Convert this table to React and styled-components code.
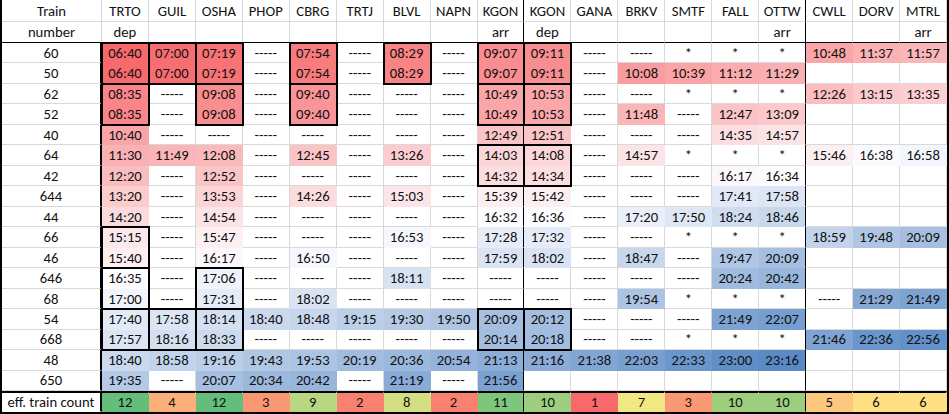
import React from 'react';
import styled, { createGlobalStyle } from 'styled-components';

const GlobalStyle = createGlobalStyle`
  html, body { margin: 0; padding: 0; background: #fff; }
  body { font-family: Carlito, Calibri, Lato, "Liberation Sans", sans-serif; }
`;

const STATIONS = ['TRTO','GUIL','OSHA','PHOP','CBRG','TRTJ','BLVL','NAPN','KGON','KGON','GANA','BRKV','SMTF','FALL','OTTW','CWLL','DORV','MTRL'];
const SUB = { 0: 'dep', 8: 'arr', 9: 'dep', 14: 'arr', 17: 'arr' };

const RAW = [
  ['60',  '06:40 07:00 07:19 - 07:54 - 08:29 - 09:07 09:11 - - * * * 10:48 11:37 11:57'],
  ['50',  '06:40 07:00 07:19 - 07:54 - 08:29 - 09:07 09:11 - 10:08 10:39 11:12 11:29 _ _ _'],
  ['62',  '08:35 - 09:08 - 09:40 - - - 10:49 10:53 - - * * * 12:26 13:15 13:35'],
  ['52',  '08:35 - 09:08 - 09:40 - - - 10:49 10:53 - 11:48 - 12:47 13:09 _ _ _'],
  ['40',  '10:40 - - - - - - - 12:49 12:51 - - - 14:35 14:57 _ _ _'],
  ['64',  '11:30 11:49 12:08 - 12:45 - 13:26 - 14:03 14:08 - 14:57 * * * 15:46 16:38 16:58'],
  ['42',  '12:20 - 12:52 - - - - - 14:32 14:34 - - - 16:17 16:34 _ _ _'],
  ['644', '13:20 - 13:53 - 14:26 - 15:03 - 15:39 15:42 - - - 17:41 17:58 _ _ _'],
  ['44',  '14:20 - 14:54 - - - - - 16:32 16:36 - 17:20 17:50 18:24 18:46 _ _ _'],
  ['66',  '15:15 - 15:47 - - - 16:53 - 17:28 17:32 - - * * * 18:59 19:48 20:09'],
  ['46',  '15:40 - 16:17 - 16:50 - - - 17:59 18:02 - 18:47 - 19:47 20:09 _ _ _'],
  ['646', '16:35 - 17:06 - - - 18:11 - - - - - - 20:24 20:42 _ _ _'],
  ['68',  '17:00 - 17:31 - 18:02 - - - - - - 19:54 * * * - 21:29 21:49'],
  ['54',  '17:40 17:58 18:14 18:40 18:48 19:15 19:30 19:50 20:09 20:12 - - - 21:49 22:07 _ _ _'],
  ['668', '17:57 18:16 18:33 - - - - - 20:14 20:18 - - * * * 21:46 22:36 22:56'],
  ['48',  '18:40 18:58 19:16 19:43 19:53 20:19 20:36 20:54 21:13 21:16 21:38 22:03 22:33 23:00 23:16 _ _ _'],
  ['650', '19:35 - 20:07 20:34 20:42 - 21:19 - 21:56 _ _ _ _ _ _ _ _ _'],
];

const ROWS = RAW.map(([num, s]) => ({
  num,
  cells: s.split(' ').map((t) => (t === '-' ? '-----' : t === '_' ? '' : t)),
}));

const COUNTS = [12, 4, 12, 3, 9, 2, 8, 2, 11, 10, 1, 7, 3, 10, 10, 5, 6, 6];

// thick frames: [first data row, data column]
const FRAMES = [
  [0, 0], [0, 1], [0, 2], [0, 4], [0, 6], [0, 8], [0, 9],
  [2, 0], [2, 2], [2, 4], [2, 8], [2, 9],
  [5, 8], [5, 9],
  [9, 0],
  [11, 0], [11, 2],
  [13, 0], [13, 1], [13, 2], [13, 8], [13, 9],
];

const isTime = (t) => /^\d\d:\d\d$/.test(t);
const toMin = (t) => { const [h, m] = t.split(':').map(Number); return h * 60 + m; };
const hex = (h) => [1, 3, 5].map((i) => parseInt(h.slice(i, i + 2), 16));
const mix = (a, b, t) => {
  const A = hex(a), B = hex(b);
  return '#' + A.map((v, i) => Math.round(v + (B[i] - v) * t).toString(16).padStart(2, '0')).join('');
};
const percentile50 = (arr) => {
  const s = [...arr].sort((x, y) => x - y);
  const k = 0.5 * (s.length - 1);
  const lo = Math.floor(k);
  return s[lo] + (s[Math.min(lo + 1, s.length - 1)] - s[lo]) * (k - lo);
};
const makeScale = (values, cMin, cMid, cMax) => {
  const min = Math.min(...values), max = Math.max(...values), mid = percentile50(values);
  return (v) => (v <= mid ? mix(cMid, cMin, (mid - v) / (mid - min)) : mix(cMid, cMax, (v - mid) / (max - mid)));
};

const allTimes = ROWS.flatMap((r) => r.cells.filter(isTime).map(toMin));
const timeColor = makeScale(allTimes, '#F8696B', '#FCFCFF', '#5A8AC6');
const countColor = makeScale(COUNTS, '#F8696B', '#FFEB84', '#63BE7B');

const GRID = '#d9d9d9';

const Sheet = styled.div`
  display: grid;
  grid-template-columns: 100px repeat(18, 1fr);
  grid-template-rows: 22px 21px repeat(17, 20.47px) 21px;
  width: 949px;
  box-sizing: border-box;
  border-left: 2px solid #000;
  border-right: 2px solid #000;
  border-bottom: 2px solid #000;
  font-size: 14.67px;
  color: #111;
  line-height: 1;
`;

const Cell = styled.div`
  grid-row: ${(p) => p.$r};
  grid-column: ${(p) => p.$c};
  display: flex;
  align-items: center;
  justify-content: center;
  box-sizing: border-box;
  white-space: nowrap;
  overflow: hidden;
  padding-top: 1px;
  background: ${(p) => p.$fill || '#fff'};
  border-right: ${(p) => p.$rw || 1}px solid ${(p) => p.$rc || p.$fill || GRID};
  border-bottom: 1px solid ${(p) => p.$bc || p.$fill || GRID};
  border-top: ${(p) => (p.$top ? '2px solid #000' : 'none')};
`;

const Frame = styled.div`
  grid-row: ${(p) => p.$r} / span 2;
  grid-column: ${(p) => p.$c};
  margin: -1px;
  border: 2px solid #000;
  pointer-events: none;
  z-index: 1;
`;

const rightColor = (j) => (j === 8 || j === 14 ? '#000' : undefined);

export default function App() {
  const items = [];
  // header rows
  items.push(<Cell key="h0" $r={1} $c={1} $rc={GRID} $bc={GRID}>Train</Cell>);
  items.push(<Cell key="h1" $r={2} $c={1} $rc={GRID} $bc="#000">number</Cell>);
  STATIONS.forEach((s, j) => {
    items.push(<Cell key={`s${j}`} $r={1} $c={j + 2} $rc={rightColor(j) || GRID} $bc={GRID}>{s}</Cell>);
    items.push(<Cell key={`u${j}`} $r={2} $c={j + 2} $rc={rightColor(j) || GRID} $bc="#000">{SUB[j] || ''}</Cell>);
  });
  // data rows
  ROWS.forEach((row, i) => {
    const r = i + 3;
    items.push(<Cell key={`n${i}`} $r={r} $c={1} $rw={2} $rc="#000">{row.num}</Cell>);
    row.cells.forEach((t, j) => {
      const fill = isTime(t) ? timeColor(toMin(t)) : undefined;
      items.push(
        <Cell key={`c${i}-${j}`} $r={r} $c={j + 2} $fill={fill} $rc={rightColor(j)}>
          {t}
        </Cell>
      );
    });
  });
  // footer
  items.push(<Cell key="f0" $r={20} $c={1} $rw={2} $rc="#000" $bc="#fff" $top>eff. train count</Cell>);
  COUNTS.forEach((n, j) => {
    items.push(
      <Cell key={`f${j}`} $r={20} $c={j + 2} $fill={countColor(n)} $rc={rightColor(j)} $top>
        {n}
      </Cell>
    );
  });
  FRAMES.forEach(([i, j]) => items.push(<Frame key={`fr${i}-${j}`} $r={i + 3} $c={j + 2} />));

  return (
    <>
      <GlobalStyle />
      <Sheet>{items}</Sheet>
    </>
  );
}
